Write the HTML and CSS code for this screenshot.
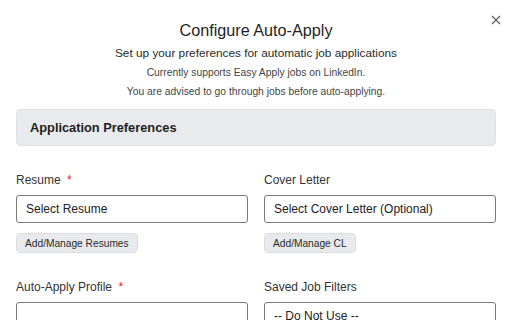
FILE: index.html
```html
<!DOCTYPE html>
<html>
<head>
<meta charset="utf-8">
<link rel="stylesheet" href="styles.css">
</head>
<body>
<div class="modal">
  <button class="close" aria-label="Close">
    <svg width="10" height="10" viewBox="0 0 10 10"><path d="M1 1L9 9M9 1L1 9" stroke="#666" stroke-width="1.4" fill="none"/></svg>
  </button>
  <header class="head">
    <h1 class="title">Configure Auto-Apply</h1>
    <p class="subtitle">Set up your preferences for automatic job applications</p>
    <p class="note">Currently supports Easy Apply jobs on LinkedIn.</p>
    <p class="note">You are advised to go through jobs before auto-applying.</p>
  </header>
  <section class="section">
    <div class="section-head">Application Preferences</div>
    <div class="grid">
      <div class="field">
        <label class="label">Resume <span class="req">*</span></label>
        <div class="select">Select Resume</div>
        <button class="btn">Add/Manage Resumes</button>
      </div>
      <div class="field">
        <label class="label">Cover Letter</label>
        <div class="select">Select Cover Letter (Optional)</div>
        <button class="btn">Add/Manage CL</button>
      </div>
      <div class="field">
        <label class="label">Auto-Apply Profile <span class="req">*</span></label>
        <div class="select"></div>
      </div>
      <div class="field">
        <label class="label">Saved Job Filters</label>
        <div class="select">-- Do Not Use --</div>
      </div>
    </div>
  </section>
</div>
</body>
</html>
```
FILE: styles.css
```css
* { box-sizing: border-box; }
html, body { margin: 0; padding: 0; background: #fff; }
body {
  font-family: "Liberation Sans", Arial, sans-serif;
  color: #222;
  overflow: hidden;
  height: 320px;
}
.modal {
  position: relative;
  padding: 0 16px;
}
.close {
  position: absolute;
  top: 15px;
  right: 11px;
  background: none;
  border: 0;
  padding: 0;
  width: 10px;
  height: 10px;
  display: flex;
}
.head {
  text-align: center;
  padding-top: 20px;
}
.title {
  margin: 0;
  font-size: 16.2px;
  font-weight: 400;
  line-height: 20px;
  color: #1f1f1f;
}
.subtitle {
  margin: 5px 0 0;
  font-size: 11.8px;
  line-height: 16px;
  color: #2a2a2a;
}
.note {
  margin: 4px 0 0;
  font-size: 10.3px;
  line-height: 15px;
  color: #444;
}
.note + .note { margin-top: 4px; }
.section { margin-top: 10px; }
.section-head {
  height: 37px;
  background: #e9eaed;
  border: 1px solid #e0e1e4;
  border-radius: 4px;
  padding: 0 13px;
  display: flex;
  align-items: center;
  font-size: 12.8px;
  font-weight: 700;
  color: #1e1e1e;
}
.grid {
  display: grid;
  grid-template-columns: 1fr 1fr;
  column-gap: 16px;
  row-gap: 26px;
  margin-top: 26px;
}
.field { display: flex; flex-direction: column; align-items: flex-start; }
.label {
  font-size: 12px;
  line-height: 16px;
  color: #333;
}
.req { color: #e0242a; margin-left: 3px; }
.select {
  margin-top: 7px;
  width: 100%;
  height: 28px;
  border: 1px solid #7a7a7a;
  border-radius: 3px;
  padding: 0 9px;
  display: flex;
  align-items: center;
  font-size: 12px;
  color: #222;
}
.btn {
  margin-top: 10px;
  height: 20px;
  padding: 0 8px;
  background: #e9eaed;
  border: 1px solid #dcdde0;
  border-radius: 4px;
  font-family: inherit;
  font-size: 10.2px;
  color: #2a2a2a;
}
```
